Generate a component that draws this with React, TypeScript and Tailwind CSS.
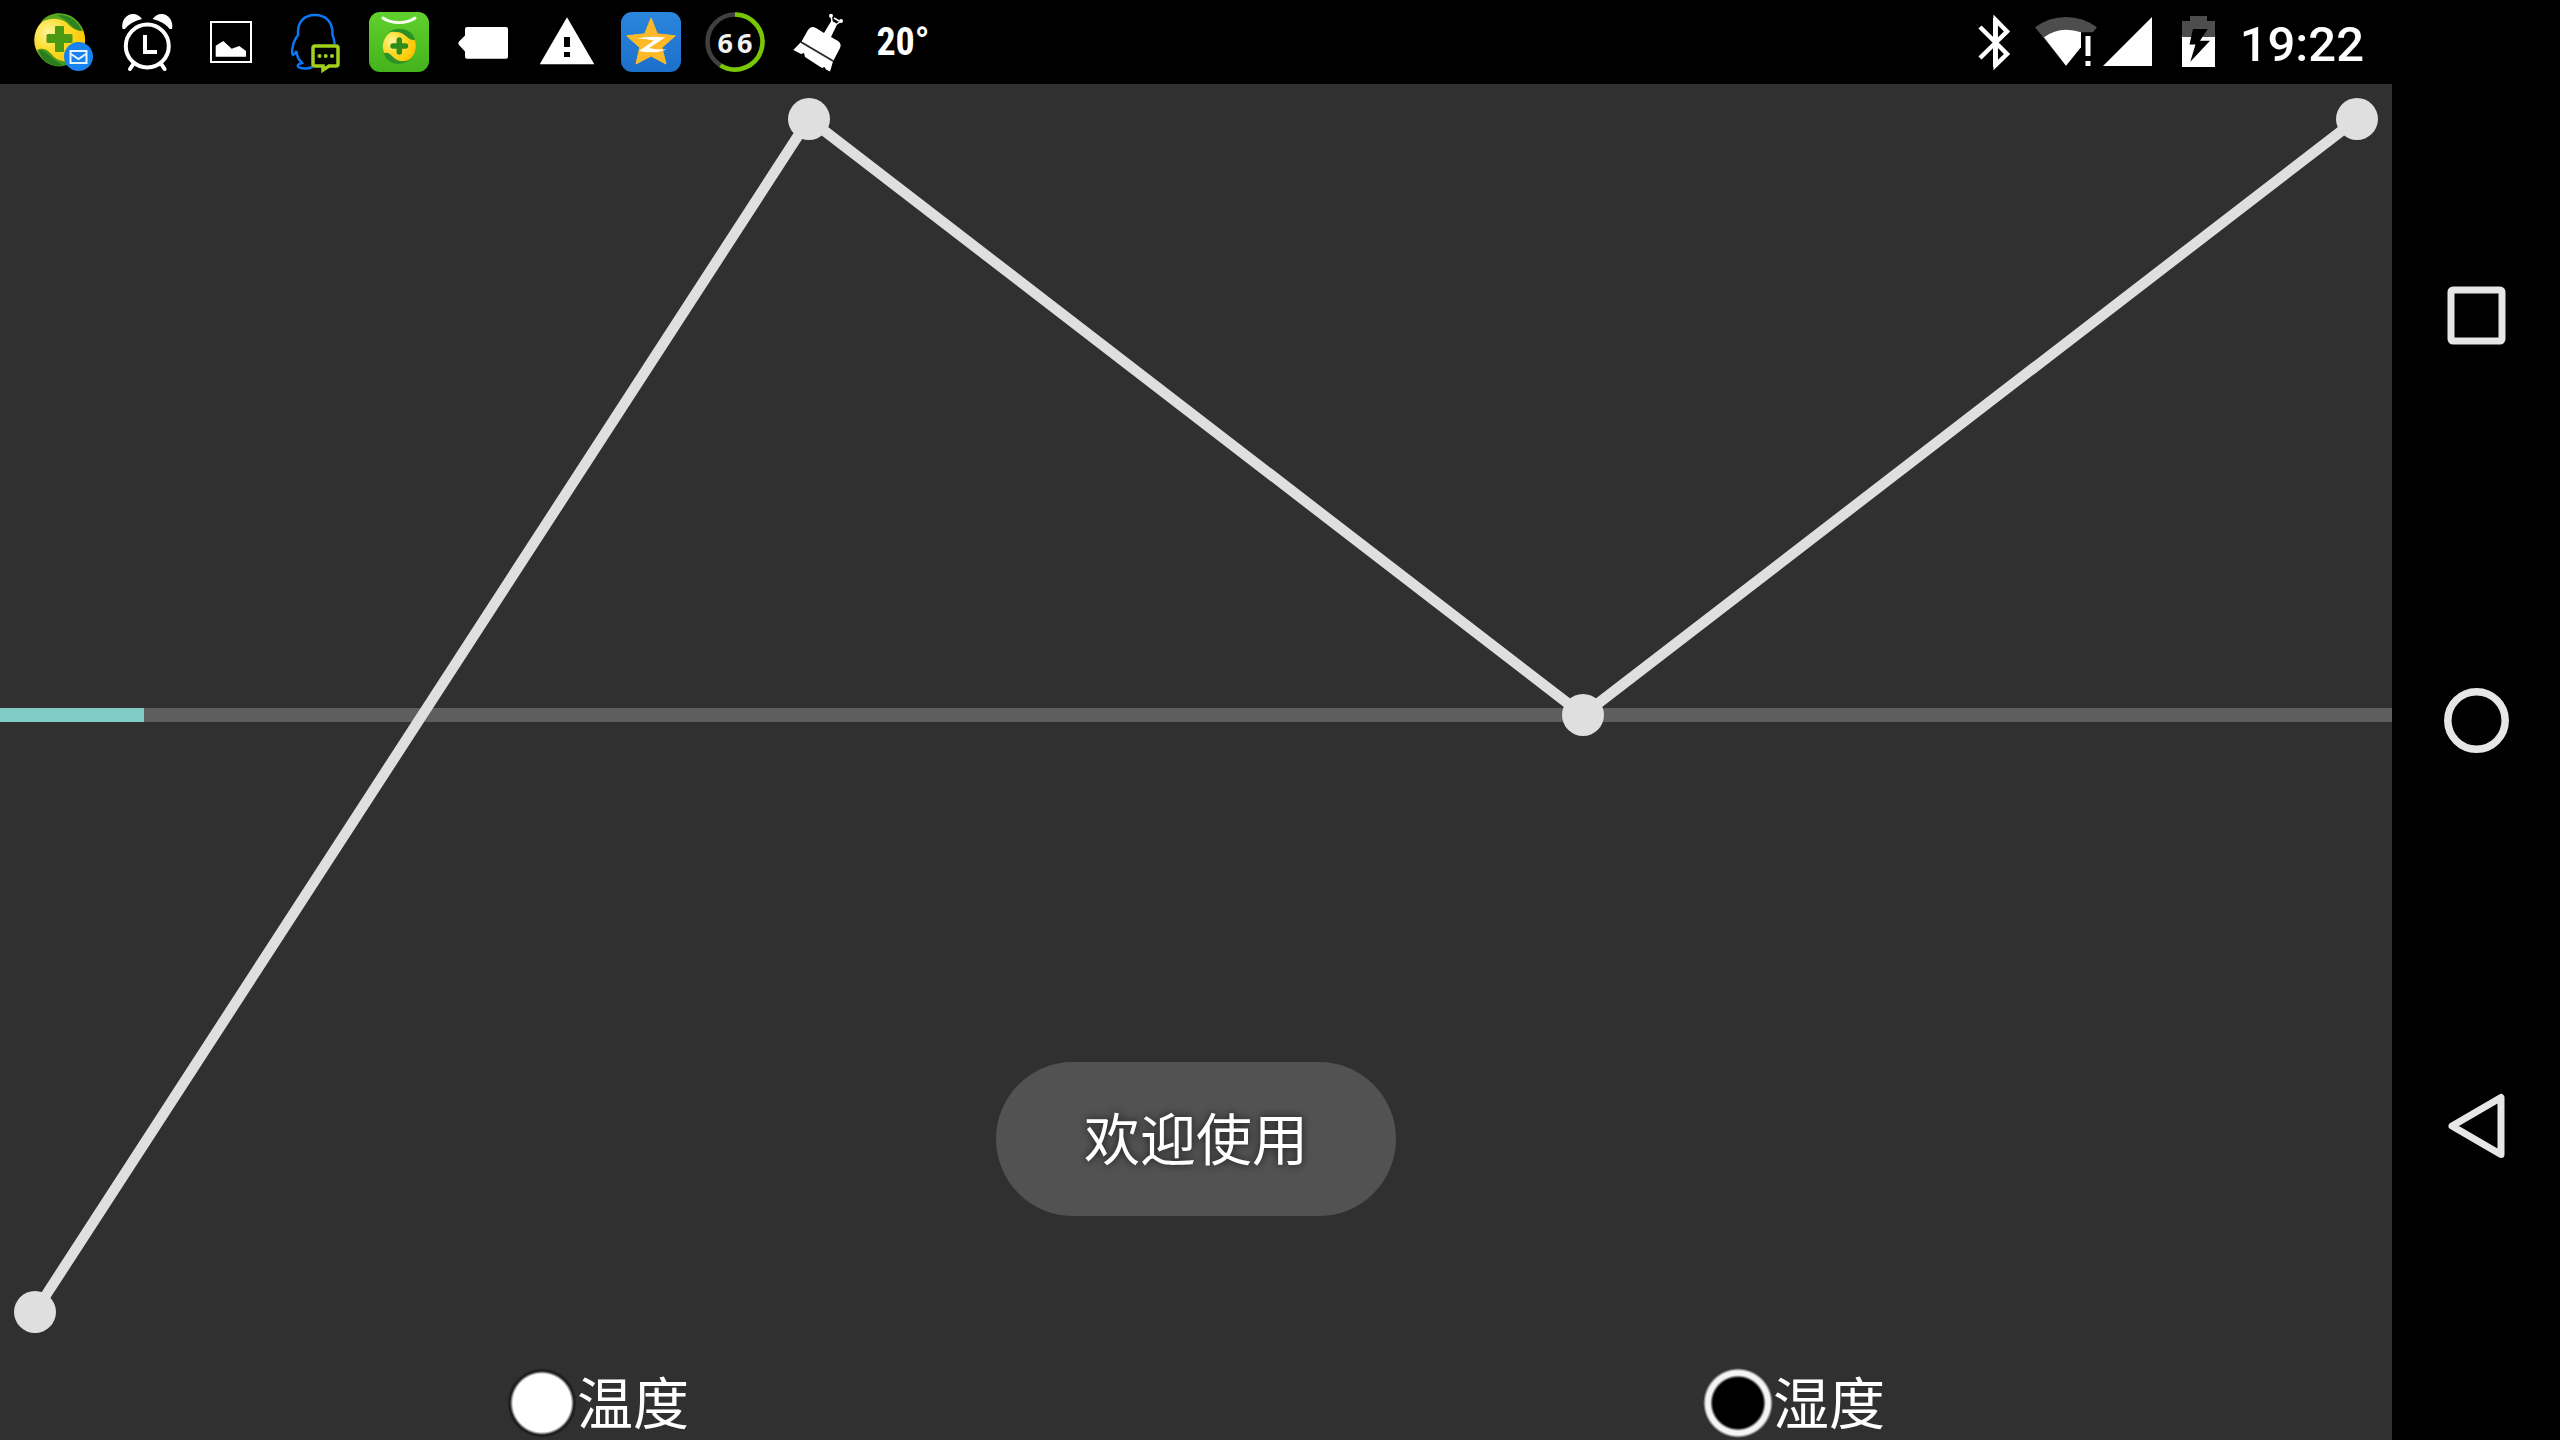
import React from "react";

const points = [
  { x: 35, y: 1228 },
  { x: 809, y: 35 },
  { x: 1583, y: 631 },
  { x: 2357, y: 35 },
];

function Slot({ label, children }: { label: string; children: React.ReactNode }) {
  return (
    <svg viewBox="0 0 84 84" className="size-[84px] shrink-0" role="img" aria-label={label}>
      {children}
    </svg>
  );
}

function Notifications() {
  return (
    <div className="flex items-center pl-[21px]">
      <svg width="0" height="0" className="absolute" aria-hidden="true">
        <defs>
          <radialGradient id="gold" cx="0.28" cy="0.35" r="0.75">
            <stop offset="0" stopColor="#fff59a" />
            <stop offset="0.45" stopColor="#fbdc2c" />
            <stop offset="1" stopColor="#ffc400" />
          </radialGradient>
          <linearGradient id="leaf" x1="0" y1="0" x2="0" y2="1">
            <stop offset="0" stopColor="#5fd12c" />
            <stop offset="1" stopColor="#45b31c" />
          </linearGradient>
          <linearGradient id="sky" x1="0" y1="0" x2="0" y2="1">
            <stop offset="0" stopColor="#2b86dd" />
            <stop offset="1" stopColor="#1c6fca" />
          </linearGradient>
        </defs>
      </svg>
      <Slot label="Security mail">
        <circle cx="38.7" cy="40" r="25.5" fill="url(#gold)" />
        <path d="M20 22C26 14 36 12 44 14C54 16 60 24 62 31C56 31 50 28 46 23C38 17 28 18 20 22Z" fill="#5aa81e" />
        <path d="M36 15C48 14 58 22 61 31C52 30 50 24 44 20Z" fill="#2f8420" />
        <path d="M16 50C23 46 29 52 33 57C39 62 46 62 52 61C47 66 38 68 30 65C23 62 18 57 16 50Z" fill="#45991f" />
        <path d="M18 50C26 50 30 60 42 65C30 68 20 60 18 50Z" fill="#2b7c1c" />
        <path d="M35 26h7q1 0 1 1v7h7q1.500 0 1.500 1.500v6q0 1.500-1.500 1.500h-7v8q0 1-1 1h-7q-1 0-1-1v-8h-7q-1.500 0-1.500-1.500v-6q0-1.500 1.500-1.500h7v-7q0-1 1-1Z" fill="#4a9a14" />
        <circle cx="57.500" cy="56.500" r="14.500" fill="#1683f0" />
        <rect x="49.500" y="51" width="16" height="12" fill="none" stroke="#e8f3ff" strokeWidth="2" />
        <path d="M50 54l7.500 5 7.500-5" fill="none" stroke="#e8f3ff" strokeWidth="2" />
      </Slot>
      <Slot label="Alarm">
        <circle cx="42.300" cy="46" r="21.500" fill="none" stroke="#fff" strokeWidth="4" />
        <path d="M40 35V52H52" fill="none" stroke="#fff" strokeWidth="4" />
        <path d="M17.500 29C16 21 21 14 28 14C32 14 35 16 37 19Q25 22 20 29Z" fill="#fff" />
        <path d="M67.100 29C68.600 21 63.600 14 56.600 14C52.600 14 49.600 16 47.600 19Q59.600 22 64.600 29Z" fill="#fff" />
        <path d="M29 63L25 69M55.600 63L59.600 69" stroke="#fff" strokeWidth="4" strokeLinecap="round" />
      </Slot>
      <Slot label="Screenshot">
        <rect x="22" y="22" width="40" height="40" fill="none" stroke="#fff" strokeWidth="2" />
        <path d="M26.700 45.700L34.300 41L42.700 48.700L50.300 46L57 51V56.700H26.700Z" fill="#fff" />
      </Slot>
      <Slot label="QQ message">
        <path
          d="M61.700 44Q61 38 59.500 35C60 22 53 15 42 15C31 15 24 22 25 35C22 39 20 44 19.500 48Q18.500 54 20 55Q22 54 23.500 51C23.500 57 26 60 29 63C26 64 24 65 25 66.500C27 69 35 69 39.500 67"
          fill="none"
          stroke="#0a78f5"
          strokeWidth="2.500"
        />
        <path d="M42 46H63Q65 46 65 48V64Q65 66 63 66H56L50 70V66H42Q40 66 40 64V48Q40 46 42 46Z" fill="#000" stroke="#a3d01c" strokeWidth="3.500" />
        <circle cx="46.500" cy="56" r="2" fill="#a3d01c" />
        <circle cx="52.700" cy="56" r="2" fill="#a3d01c" />
        <circle cx="59" cy="56" r="2" fill="#a3d01c" />
      </Slot>
      <Slot label="App store">
        <rect x="12" y="12" width="60" height="60" rx="11" fill="url(#leaf)" />
        <path d="M26 18C34 24 50 24 58 18" fill="none" stroke="#f4ffe9" strokeWidth="3" strokeLinecap="round" />
        <circle cx="42.300" cy="46.300" r="16.500" fill="url(#gold)" />
        <path d="M31 33C40 25 56 29 58 40C50 41 49 32 39 32Q34 31 31 33Z" fill="#2d8f2a" />
        <path d="M27 53C34 51 35 59 43 61Q49 62 54 59C46 67 29 65 27 53Z" fill="#2d8f2a" />
        <path d="M42.300 40v12M36 46h12.500" stroke="#2f8c1a" strokeWidth="5.500" strokeLinecap="round" />
      </Slot>
      <Slot label="Tag">
        <path d="M26 27H65Q67 27 67 29V56.500Q67 58.700 65 58.700H26Q24 58.700 24 56.500V51.500L18 45Q16.500 43 18 41.500L24 35.500V29Q24 27 26 27Z" fill="#fff" />
      </Slot>
      <Slot label="Warning">
        <path d="M42 17.300L69.300 64.300H14.700Z" fill="#fff" />
        <path d="M39 37h6v10h-6ZM39 52h6v5h-6Z" fill="#000" />
      </Slot>
      <Slot label="Qzone">
        <rect x="12" y="12" width="60" height="60" rx="11" fill="url(#sky)" />
        <path
          d="M42 18L48.300 33.800L66.300 35.800L53 47.500L57 64L42 56L27 64L30.700 47.500L17.700 35.800L35.700 33.800Z"
          fill="#fdb927"
          stroke="#fdb927"
          strokeLinejoin="round"
        />
        <path d="M28.500 38.500Q40 35.500 56 37.500L40 48Q48 50 58 49.500Q46 54 30 51L45 40.500Q38 39 28.500 38.500Z" fill="#fff" />
      </Slot>
      <div className="grid size-[84px] shrink-0 place-items-center">
        <svg viewBox="0 0 84 84" className="col-start-1 row-start-1 size-[84px]" aria-hidden="true">
          <circle cx="42" cy="42" r="27.500" fill="none" stroke="#404040" strokeWidth="4.500" />
          <path d="M42 14.500A27.500 27.500 0 1 1 27.500 65.400" fill="none" stroke="#77c800" strokeWidth="4.500" />
        </svg>
        <span className="col-start-1 row-start-1 flex gap-1 font-['Open_Sans'] text-[27px] leading-none font-bold text-[#f2f2f2]">
          <span>6</span>
          <span>6</span>
        </span>
      </div>
      <Slot label="Cleaner">
        <path d="M31 30Q34 25 39 28L47 33L54.500 20.500L60.300 24L54 37L61 41Q65 44 63 48L56.500 60.500L24.500 41.500Z" fill="#fff" />
        <path d="M23.500 42.500L56 61.500L53 71.500L49 69.500L47.500 67L45 68L28 57L27 53L24 54L16.300 50Z" fill="#fff" />
        <path d="M24 42L56 61" stroke="#333" strokeWidth="1.500" />
        <path d="M55 21L54 16M60 24L64 21M57 18L62 21" stroke="#fff" strokeWidth="1.500" />
        <circle cx="54" cy="15.700" r="2" fill="#fff" />
        <circle cx="64" cy="21" r="2" fill="#fff" />
      </Slot>
      <span className="w-[84px] text-center font-['Liberation_Sans_Narrow','Roboto_Condensed','Roboto'] text-[38px] leading-none font-bold">
        20°
      </span>
    </div>
  );
}

function SystemStatus() {
  return (
    <div className="flex items-center pr-7">
      <svg viewBox="0 0 34 84" className="mr-6 h-[84px] w-[34px]" role="img" aria-label="Bluetooth">
        <path d="M3 27L30 54L18.700 65V20L30 31.500L3 58" fill="none" stroke="#fff" strokeWidth="4.500" />
        <path d="M16 18h3v49h-3Z" fill="#fff" />
      </svg>
      <svg viewBox="0 0 62 84" className="mr-1.5 h-[84px] w-[62px]" role="img" aria-label="Wi-Fi">
        <path d="M0 27.300Q14 17 31 17T62 27.300L58 32.300H46V40L31 65.700Z" fill="#4d4d4d" />
        <path d="M9 37.300Q19 29.700 31 29.700Q39 29.700 46 32.300V47.300L31 65.700Z" fill="#fff" />
        <path d="M50.500 36h5v20h-5ZM50.500 61h5v5h-5Z" fill="#fff" />
      </svg>
      <svg viewBox="0 0 49 84" className="mr-[30px] h-[84px] w-[49px]" role="img" aria-label="Signal">
        <path d="M0 66L49 17V66Z" fill="#fff" />
      </svg>
      <svg viewBox="0 0 33 84" className="mr-[25px] h-[84px] w-[33px]" role="img" aria-label="Battery charging">
        <path d="M0 21H8V16H25V21H33V37H0Z" fill="#4d4d4d" />
        <path d="M0 37H33V67H0Z" fill="#fff" />
        <path d="M11 29H25.700L18 40.700H28L8.300 61.700L13.500 44.500H7.500Z" fill="#000" />
      </svg>
      <time className="pt-1 font-['Roboto'] text-[49px] leading-none font-medium">19:22</time>
    </div>
  );
}

function TrendChart() {
  return (
    <section className="relative min-h-0 flex-1">
      <div className="flex h-full items-center pb-px">
        <div
          role="progressbar"
          aria-label="Progress"
          aria-valuenow={6}
          aria-valuemin={0}
          aria-valuemax={100}
          className="h-3.5 w-full bg-[#5e5e5e]"
        >
          <div className="h-full w-[6%] bg-[#80cbc4]" />
        </div>
      </div>
      <svg viewBox="0 0 2392 1263" className="absolute inset-0 size-full" role="img" aria-label="Trend">
        <polyline points={points.map((p) => `${p.x},${p.y}`).join(" ")} fill="none" stroke="#dfdfdf" strokeWidth="10.500" />
        {points.map((p) => (
          <circle key={p.x} cx={p.x} cy={p.y} r="21" fill="#dfdfdf" />
        ))}
      </svg>
    </section>
  );
}

function RadioOption({ label, defaultChecked }: { label: string; defaultChecked?: boolean }) {
  return (
    <label className="flex flex-1 items-center justify-center text-[56px] leading-[70px]">
      <input
        type="radio"
        name="series"
        defaultChecked={defaultChecked}
        className="size-[70px] shrink-0 appearance-none rounded-full bg-[radial-gradient(circle_closest-side,#000_25px,#f4f4f4_28px,#f4f4f4_32px,transparent_35px)] checked:bg-[radial-gradient(circle_closest-side,#fff_29px,#1a1a1a_32px,#1f1f1f_33px,transparent_35px)]"
      />
      <span className="pt-1">{label}</span>
    </label>
  );
}

function NavBar() {
  return (
    <nav className="flex w-[168px] shrink-0 flex-col items-center justify-center gap-[125px] bg-black">
      <button type="button" aria-label="Recents" className="grid h-[280px] w-full place-items-center">
        <svg viewBox="0 0 70 70" className="size-[70px]">
          <rect x="10" y="10" width="51" height="51" rx="2" fill="none" stroke="#e6e6e6" strokeWidth="7" />
        </svg>
      </button>
      <button type="button" aria-label="Home" className="grid h-[280px] w-full place-items-center">
        <svg viewBox="0 0 70 70" className="size-[70px]">
          <circle cx="35.500" cy="35.500" r="28.700" fill="none" stroke="#e6e6e6" strokeWidth="7.500" />
        </svg>
      </button>
      <button type="button" aria-label="Back" className="grid h-[280px] w-full place-items-center">
        <svg viewBox="0 0 70 70" className="size-[70px]">
          <path d="M60 7.500V64.500L11 36Z" fill="none" stroke="#e6e6e6" strokeWidth="7" strokeLinejoin="round" />
        </svg>
      </button>
    </nav>
  );
}

export default function App() {
  return (
    <div className="flex h-screen bg-[#303030] font-['Roboto','Noto_Sans_CJK_SC',sans-serif] text-white">
      <div className="relative flex min-w-0 flex-1 flex-col">
        <header className="flex h-[84px] shrink-0 justify-between bg-black">
          <Notifications />
          <SystemStatus />
        </header>
        <main className="flex min-h-0 flex-1 flex-col">
          <TrendChart />
          <fieldset className="flex shrink-0 items-center pt-[19px]">
            <RadioOption label="温度" defaultChecked />
            <RadioOption label="湿度" />
          </fieldset>
        </main>
        <div
          role="status"
          className="absolute bottom-56 left-1/2 -translate-x-1/2 rounded-full bg-[#525252] px-[88px] pt-[42px] pb-[38px] text-[56px] leading-[74px] whitespace-nowrap [text-shadow:0_0_8px_rgba(0,0,0,0.7)]"
        >
          欢迎使用
        </div>
      </div>
      <NavBar />
    </div>
  );
}
